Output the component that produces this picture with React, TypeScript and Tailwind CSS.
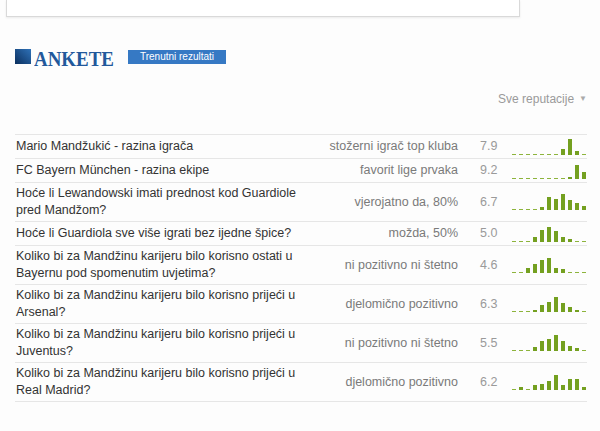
import React from "react";

type Row = { q: string; a: string; v: string; bars: number[] };

const rows: Row[] = [
  { q: "Mario Mandžukić - razina igrača", a: "stožerni igrač top kluba", v: "7.9", bars: [1, 1, 1, 1, 1, 1, 1, 6, 16, 4, 1] },
  { q: "FC Bayern München - razina ekipe", a: "favorit lige prvaka", v: "9.2", bars: [1, 1, 1, 1, 1, 1, 1, 1, 2, 14, 7] },
  { q: "Hoće li Lewandowski imati prednost kod Guardiole pred Mandžom?", a: "vjerojatno da, 80%", v: "6.7", bars: [1, 1, 1, 1, 3, 13, 11, 16, 10, 7, 4] },
  { q: "Hoće li Guardiola sve više igrati bez ijedne špice?", a: "možda, 50%", v: "5.0", bars: [1, 1, 1, 5, 12, 15, 11, 5, 3, 1, 1] },
  { q: "Koliko bi za Mandžinu karijeru bilo korisno ostati u Bayernu pod spomenutim uvjetima?", a: "ni pozitivno ni štetno", v: "4.6", bars: [1, 1, 5, 9, 13, 15, 5, 4, 1, 1, 1] },
  { q: "Koliko bi za Mandžinu karijeru bilo korisno prijeći u Arsenal?", a: "djelomično pozitivno", v: "6.3", bars: [1, 1, 1, 2, 7, 10, 15, 9, 5, 2, 1] },
  { q: "Koliko bi za Mandžinu karijeru bilo korisno prijeći u Juventus?", a: "ni pozitivno ni štetno", v: "5.5", bars: [1, 1, 1, 4, 10, 12, 16, 10, 5, 3, 1] },
  { q: "Koliko bi za Mandžinu karijeru bilo korisno prijeći u Real Madrid?", a: "djelomično pozitivno", v: "6.2", bars: [1, 3, 1, 5, 6, 9, 15, 5, 11, 11, 3] },
];

function Chart({ bars }: { bars: number[] }) {
  return (
    <div className="flex items-end h-[16px] gap-[3px] w-[74px]">
      {bars.map((h, i) => (
        <div
          key={i}
          className={h <= 1 ? "w-[4px] bg-[#8db43c]" : "w-[4px] bg-[#74a020]"}
          style={{ height: `${h}px` }}
        />
      ))}
    </div>
  );
}

export default function App() {
  return (
    <div className="w-[600px] h-[431px] bg-[#fdfdfd] overflow-hidden font-['Liberation_Sans',Arial,sans-serif]">
      <div className="ml-[6px] w-[514px] h-[17px] bg-white border border-t-0 border-[#d9d9d9] shadow-[0_1px_2px_rgba(0,0,0,0.08)]" />

      <div className="mt-[32px] ml-[15px] flex items-center h-[15px]">
        <div className="w-[16px] h-[15px] bg-[linear-gradient(45deg,#0b2f5e,#2f72b8)]" />
        <div className="ml-[3px] w-[80px] h-[15px] overflow-visible whitespace-nowrap">
          <span className="inline-block origin-left scale-x-[0.86] font-['Liberation_Serif',serif] font-bold text-[22px] leading-[15px] text-[#22589b]">
            ANKETE
          </span>
        </div>
        <div className="ml-[14px] w-[98px] h-[14px] bg-[#3679c4] text-white text-[10px] leading-[14px] text-center">
          Trenutni rezultati
        </div>
      </div>

      <div className="mt-[28px] w-[587px] flex justify-end items-center h-[14px] text-[12px] text-[#9a9a9a]">
        <span>Sve reputacije</span>
        <span className="ml-[5px] text-[8px] text-[#aaaaaa]">▼</span>
      </div>

      <div className="mt-[28px] ml-[15px] w-[572px] border-t border-[#e6e6e6]">
        {rows.map((r, i) => (
          <div key={i} className="flex items-center min-h-[24px] py-[2px] border-b border-[#e6e6e6] text-[12.5px] leading-[17px]">
            <div className="w-[290px] pl-[1px] text-[#333333]">{r.q}</div>
            <div className="w-[153px] text-right text-[#7a7a7a]">{r.a}</div>
            <div className="ml-[22px] w-[32px] text-[#9a9a9a]">{r.v}</div>
            <Chart bars={r.bars} />
          </div>
        ))}
      </div>
    </div>
  );
}
